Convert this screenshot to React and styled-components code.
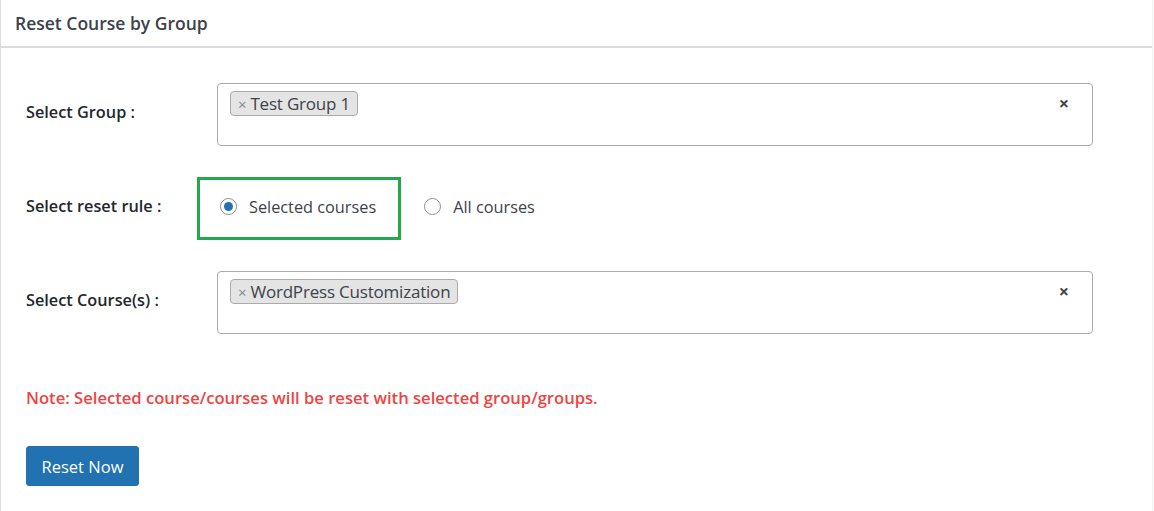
import React, { useState } from "react"
import styled, { createGlobalStyle } from "styled-components"

const GlobalStyle = createGlobalStyle`
  html, body {
    margin: 0;
    padding: 0;
    background: #fff;
    font-family: "Open Sans", "Noto Sans", sans-serif;
    color: #3c434a;
  }
`

const groups = [{ id: 1, name: "Test Group 1" }]
const courses = [{ id: 7, name: "WordPress Customization" }]

const Tag = ({ label }) => (
  <TagChip>
    <span className="remove">×</span>
    {label}
  </TagChip>
)

const MultiSelect = ({ items }) => (
  <SelectBox>
    <TagList>
      {items.map(i => (
        <Tag key={i.id} label={i.name} />
      ))}
    </TagList>
    <ClearButton>×</ClearButton>
  </SelectBox>
)

const App = () => {
  const [rule, setRule] = useState("selected")

  return (
    <>
      <GlobalStyle />
      <Panel>
        <PanelHeader>Reset Course by Group</PanelHeader>
        <PanelBody>
          <FormRow>
            <Label>Select Group :</Label>
            <MultiSelect items={groups} />
          </FormRow>

          <FormRow>
            <Label>Select reset rule :</Label>
            <RadioGroup>
              <RadioOption highlighted onClick={() => setRule("selected")}>
                <Radio checked={rule === "selected"} />
                Selected courses
              </RadioOption>
              <RadioOption onClick={() => setRule("all")}>
                <Radio checked={rule === "all"} />
                All courses
              </RadioOption>
            </RadioGroup>
          </FormRow>

          <FormRow>
            <Label>Select Course(s) :</Label>
            <MultiSelect items={courses} />
          </FormRow>

          <Note>Note: Selected course/courses will be reset with selected group/groups.</Note>

          <ResetButton>Reset Now</ResetButton>
        </PanelBody>
      </Panel>
    </>
  )
}

export default App

const Panel = styled.div`
  width: 1153px;
  height: 511px;
  box-sizing: border-box;
  border-left: 1px solid #dcdcde;
  border-right: 1px solid #f0f0f1;
  background: #fff;
`

const PanelHeader = styled.div`
  height: 46px;
  padding-left: 14px;
  display: flex;
  align-items: center;
  font-size: 17.5px;
  font-weight: 600;
  color: #3c434a;
  border-bottom: 2px solid #dcdcde;
`

const PanelBody = styled.div`
  padding: 35px 0 0 25px;
  display: flex;
  flex-direction: column;
`

const FormRow = styled.div`
  display: grid;
  grid-template-columns: 191px 876px;
  align-items: center;
  margin-bottom: 31px;
`

const Label = styled.div`
  font-size: 16.3px;
  font-weight: 600;
  color: #23282d;
  padding-bottom: 6px;
`

const SelectBox = styled.div`
  height: 63px;
  box-sizing: border-box;
  border: 1px solid #aaa;
  border-radius: 4px;
  display: flex;
  align-items: flex-start;
  justify-content: space-between;
  padding: 7px 23px 0 12px;
`

const TagList = styled.div`
  display: flex;
  gap: 5px;
`

const TagChip = styled.span`
  display: inline-flex;
  align-items: center;
  height: 25px;
  box-sizing: border-box;
  padding: 0 7px 0 7px;
  background: #e4e4e4;
  border: 1px solid #aaa;
  border-radius: 4px;
  font-size: 17px;
  color: #3c434a;
  letter-spacing: -0.2px;

  .remove {
    color: #888;
    font-size: 15px;
    margin-right: 4px;
  }
`

const ClearButton = styled.span`
  font-size: 18px;
  font-weight: 700;
  color: #444;
  line-height: 22px;
  margin-top: 1px;
`

const RadioGroup = styled.div`
  display: flex;
  align-items: center;
  margin-left: -20px;
`

const RadioOption = styled.label`
  display: flex;
  align-items: center;
  gap: 12px;
  height: 63px;
  box-sizing: border-box;
  padding: 0 ${p => (p.highlighted ? "22px" : "0")} 4px 20px;
  border: 3px solid ${p => (p.highlighted ? "#22a94a" : "transparent")};
  font-size: 16.3px;
  color: #3c434a;
  cursor: pointer;
`

const Radio = styled.span`
  width: 17px;
  height: 17px;
  box-sizing: border-box;
  border-radius: 50%;
  border: 1px solid #8c8f94;
  display: inline-flex;
  align-items: center;
  justify-content: center;

  &::after {
    content: "";
    width: 9px;
    height: 9px;
    border-radius: 50%;
    background: ${p => (p.checked ? "#2271b1" : "transparent")};
  }
`

const Note = styled.p`
  margin: 21px 0 0 0;
  font-size: 16.6px;
  font-weight: 600;
  color: #ef4444;
  line-height: 24px;
`

const ResetButton = styled.button`
  margin-top: 36px;
  align-self: flex-start;
  width: 113px;
  height: 40px;
  background: #2271b1;
  border: 1px solid #2271b1;
  border-radius: 3px;
  color: #fff;
  font-family: "Open Sans", "Noto Sans", sans-serif;
  font-size: 16.5px;
  cursor: pointer;
`
